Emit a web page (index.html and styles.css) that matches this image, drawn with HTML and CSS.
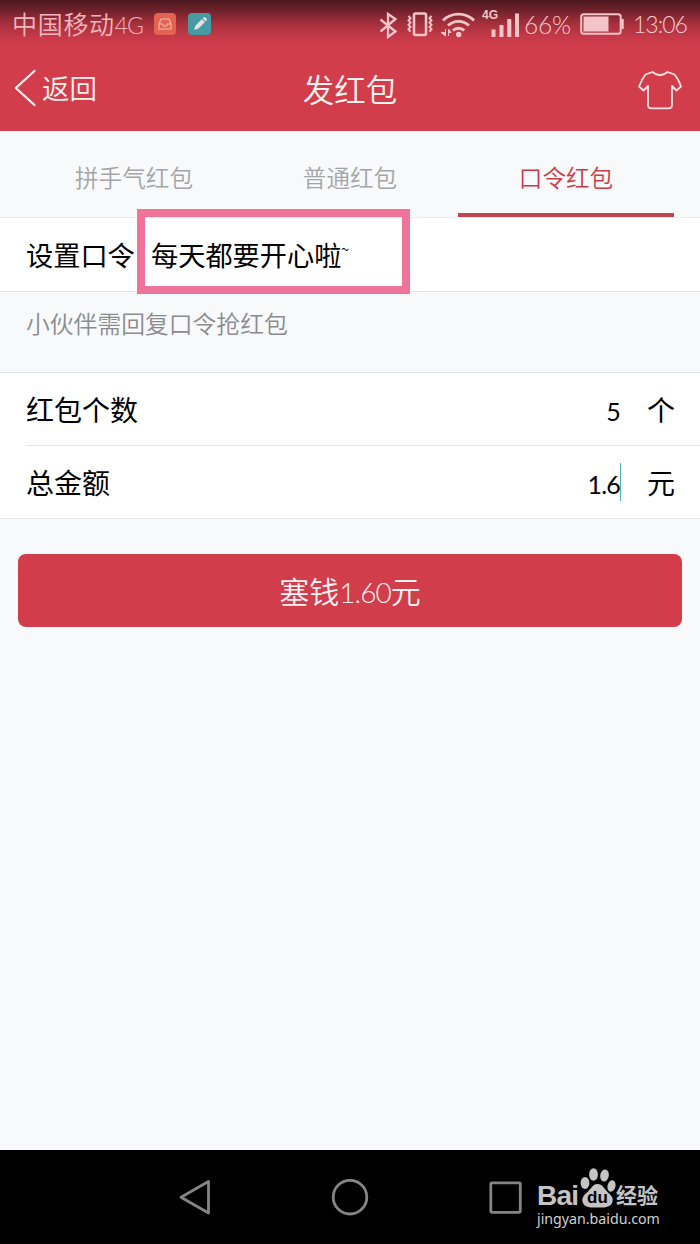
FILE: index.html
```html
<!DOCTYPE html>
<html lang="zh-CN">
<head>
<meta charset="utf-8">
<title>发红包</title>
<link rel="stylesheet" href="styles.css">
</head>
<body>
<div class="screen">
  <div class="top">
    <div class="status">
      <span class="carrier">中国移动<span class="carrier-net">4G</span></span>
      <svg class="app-inbox" width="22" height="22" viewBox="0 0 22 22"><rect width="22" height="22" rx="4" fill="#e2634f"/><path d="M7 6h8l2 5v5H5v-5zM5 11h3.500l1 2h3l1-2H17" fill="none" stroke="#f4b9ae" stroke-width="1.100" stroke-linejoin="round"/></svg>
      <svg class="app-pen" width="23" height="22" viewBox="0 0 23 22"><rect width="23" height="22" rx="4" fill="#469ba3"/><path d="M6 17l1.500-4.500 6.300-6.300 3 3-6.300 6.300zM14.600 5.400l1-1q1-.7 1.900.2l.9.9q.9.900.2 1.900l-1 1z" fill="#eadfe0"/></svg>
      <div class="status-right">
        <svg width="144" height="36" viewBox="376 6 144 36" fill="none" stroke="#f3c5c9">
          <path d="M380.500 19.500l15 12-7.500 5.500V14l7.500 5-15 12.500" stroke-width="2.300"/>
          <rect x="414" y="13.500" width="12" height="21.500" rx="1.500" stroke-width="2.500"/>
          <path d="M408.500 16l2 2.200-2 2.200 2 2.200-2 2.200 2 2.200-2 2.200 2 2.500M431.500 16l-2 2.200 2 2.200-2 2.200 2 2.200-2 2.200 2 2.200-2 2.500" stroke-width="2"/>
          <path d="M443 20.500a22 22 0 0 1 31 0M448 25.600a15 15 0 0 1 21 0M452.800 30.500a8.500 8.500 0 0 1 11.500 0" stroke-width="2.800"/>
          <circle cx="458.700" cy="34.500" r="2.700" fill="#f3c5c9" stroke="none"/>
          <path d="M445.500 29v7l-4.500-3.500h4.500M448.500 36v-7l2.500 3.500h-2.500" fill="#f3c5c9" stroke-width="1"/>
          <path d="M493.500 29.500V37M501.500 25v12M509.300 19v18M517 13.500V37" stroke-width="4"/>
          <text x="482" y="19" class="signal-label">4G</text>
        </svg>
        <span class="percent">66%</span>
        <svg class="battery" width="44" height="24" viewBox="0 0 44 24"><rect x="1.200" y="2.200" width="39.500" height="19.500" rx="2.500" fill="none" stroke="#f3c5c9" stroke-width="2"/><rect x="3.500" y="4.500" width="25" height="15" fill="#f3c5c9"/><path d="M42.500 7v10" stroke="#f3c5c9" stroke-width="2.500"/></svg>
        <span class="clock">13:06</span>
      </div>
    </div>
    <div class="header">
      <div class="back">
        <svg width="24" height="38" viewBox="0 0 24 38"><path d="M20.500 2L1.800 19l18.700 17" fill="none" stroke="#fff0f0" stroke-width="2.300" stroke-linecap="round" stroke-linejoin="round"/></svg>
        <span>返回</span>
      </div>
      <h1 class="title">发红包</h1>
      <svg class="shirt" width="46" height="40" viewBox="0 0 46 40"><path d="M15.500 2L8.500 4.500Q5 9 2 16.500l4.500 4L11 16v19q0 3.300 3.500 3.300h17q3.500 0 3.500-3.300V16l4.500 4.500 4.500-4Q41.500 9 37.500 4.500L30.500 2q-7.500 6.500-15 0z" fill="none" stroke="#ffe3e4" stroke-width="1.800" stroke-linejoin="round"/></svg>
    </div>
  </div>

  <div class="tabs">
    <div class="tab">拼手气红包</div>
    <div class="tab">普通红包</div>
    <div class="tab tab-active">口令红包</div>
  </div>

  <div class="phrase-row">
    <span class="phrase-label">设置口令</span>
    <span class="phrase-value">每天都要开心啦<span class="tilde">~</span></span>
    <span class="highlight"></span>
  </div>

  <div class="hint">小伙伴需回复口令抢红包</div>

  <div class="form">
    <div class="field field-count">
      <span class="label">红包个数</span>
      <span class="amount">5</span>
      <span class="unit">个</span>
    </div>
    <div class="field">
      <span class="label">总金额</span>
      <span class="amount">1.6</span><span class="caret"></span>
      <span class="unit">元</span>
    </div>
  </div>

  <div class="submit">塞钱<span class="submit-sum">1.60</span>元</div>

  <div class="nav">
    <svg class="nav-icons" width="360" height="46" viewBox="170 1174 360 46" fill="none" stroke="#858585" stroke-width="2.800" stroke-linejoin="round">
      <path d="M208.500 1181.500v31.500l-27.500-15.700z"/>
      <circle cx="350" cy="1197.200" r="16.800"/>
      <rect x="490.800" y="1182.800" width="29.500" height="29.500" rx="1"/>
    </svg>
    <div class="watermark">
      <div class="brand">
        <span class="bai">Bai</span>
        <svg class="paw" width="36" height="40" viewBox="0 0 36 40"><g fill="#c4c4c4"><ellipse cx="5" cy="15" rx="4.400" ry="6"/><ellipse cx="13.500" cy="6.500" rx="4.400" ry="6.200"/><ellipse cx="24.500" cy="7.500" rx="4.300" ry="6" transform="rotate(10 24.500 7.500)"/><ellipse cx="31.500" cy="18" rx="4" ry="5.800" transform="rotate(12 31.500 18)"/><path d="M17.500 16c5 0 7 5 10 8s7 6 4.500 11-9 4.500-14.500 4.500S5 40 3 35s1-8 4.500-11 5-8 10-8z"/></g><text x="17.500" y="35" class="du">du</text></svg>
        <span class="jingyan">经验</span>
      </div>
      <div class="site">jingyan.baidu.com</div>
    </div>
  </div>
</div>
</body>
</html>
```

FILE: styles.css
```css
* { box-sizing: border-box; }

body {
  margin: 0;
  font-family: "Noto Sans CJK SC", sans-serif;
  font-weight: 350;
}

.screen {
  width: 700px;
  height: 1244px;
  display: flex;
  flex-direction: column;
  background: #f8f9fb;
  overflow: hidden;
  white-space: nowrap;
}

.top {
  height: 131px;
  flex: none;
  background: linear-gradient(#4b171d 0, #661f28 8px, #a6303d 24px, #c83a49 38px, #d23d4b 50px);
}

.status {
  height: 48px;
  display: flex;
  align-items: center;
  padding-left: 12px;
  color: #f0b5bb;
}

.carrier {
  width: 142px;
  font-size: 25px;
  letter-spacing: 0.7px;
  line-height: 36px;
}

.carrier-net {
  font-family: Lato, sans-serif;
  font-size: 23px;
  letter-spacing: -1.2px;
}

.app-pen { margin-left: 12px; }

.status-right {
  display: flex;
  align-items: center;
  margin-left: auto;
  padding-right: 12px;
  font-family: Lato, sans-serif;
  color: #f6cace;
}

.signal-label {
  font: bold 12px "Liberation Sans", sans-serif;
  fill: #f3c5c9;
  stroke: none;
}

.percent {
  width: 60px;
  padding-left: 4px;
  font-size: 24.500px;
  letter-spacing: -0.2px;
}

.battery { display: block; }

.clock {
  width: 64px;
  padding-left: 9px;
  font-size: 23px;
  letter-spacing: -1px;
}

.header {
  height: 83px;
  display: grid;
  grid-template-columns: 1fr auto 1fr;
  align-items: center;
  padding: 0 17px 0 14px;
  color: #fff2f2;
}

.back {
  display: flex;
  align-items: center;
  gap: 4px;
  font-size: 27.500px;
  line-height: 36px;
  padding-bottom: 3px;
}

.back span { padding-bottom: 2px; }

.title {
  margin: 0;
  font-size: 31.500px;
  font-weight: 350;
  line-height: 40px;
  padding: 0 0 3px 3px;
}

.shirt { justify-self: end; }

.tabs {
  height: 87px;
  flex: none;
  display: grid;
  grid-template-columns: repeat(3, 216px);
  padding: 0 26px;
  border-bottom: 1px solid #ebecee;
}

.tab {
  font-size: 23.600px;
  line-height: 35px;
  padding-top: 29px;
  text-align: center;
  color: #a4a5a7;
}

.tab-active {
  color: #c93c49;
  border-bottom: 4px solid #c34552;
}

.phrase-row {
  position: relative;
  height: 74px;
  flex: none;
  display: flex;
  align-items: center;
  padding: 0 0 2px 26px;
  font-size: 27.200px;
  font-weight: 400;
  color: #000;
  background: #fff;
  border-bottom: 1px solid #e3e4e6;
}

.phrase-label { width: 125px; }

.tilde {
  font-size: 14px;
  line-height: 1;
  vertical-align: 11px;
}

.highlight {
  position: absolute;
  left: 137px;
  top: -9px;
  width: 273px;
  height: 85px;
  border: 8px solid #f07399;
}

.hint {
  height: 80px;
  flex: none;
  padding: 13px 26px 0;
  font-size: 23.800px;
  line-height: 35px;
  color: #8a8b8e;
}

.form {
  height: 147px;
  flex: none;
  background: #fff;
  border-top: 1px solid #e3e4e6;
  border-bottom: 1px solid #e3e4e6;
}

.field {
  height: 72px;
  margin-left: 26px;
  padding-right: 26px;
  display: flex;
  align-items: center;
  font-size: 28px;
  font-weight: 400;
  color: #000;
}

.field-count {
  height: 73px;
  border-bottom: 1px solid #e3e4e6;
}

.amount {
  margin-left: auto;
  padding-top: 4px;
  font-family: Lato, sans-serif;
  font-size: 25px;
  letter-spacing: -0.8px;
}

.field-count .amount { margin-right: 1px; }

.caret {
  width: 1px;
  height: 38px;
  background: #4fb5ad;
}

.unit { margin-left: 26px; margin-right: -1px; }

.submit {
  height: 73px;
  flex: none;
  margin: 35px 18px 0;
  border-radius: 8px;
  background: #d13d4b;
  color: #fff2f2;
  font-size: 30px;
  line-height: 72px;
  text-align: center;
}

.submit-sum {
  font-family: Lato, sans-serif;
  font-size: 28px;
  letter-spacing: -1px;
}

.nav {
  position: relative;
  height: 94px;
  flex: none;
  margin-top: auto;
  padding: 24px 0 0 170px;
  background: #000;
}

.nav-icons { display: block; }

.watermark {
  position: absolute;
  left: 537px;
  top: 18px;
  width: 126px;
  color: #c4c4c4;
}

.brand {
  height: 40px;
  display: flex;
  align-items: flex-end;
}

.bai {
  width: 43px;
  font: bold 28px/25px "Liberation Sans", sans-serif;
  letter-spacing: -0.8px;
}

.du {
  font: bold 17px "Liberation Sans", sans-serif;
  fill: #000;
  text-anchor: middle;
}

.jingyan {
  font-size: 21px;
  font-weight: 700;
  line-height: 27px;
}

.site {
  margin-top: 2px;
  font: 14.200px/18px "Noto Sans", sans-serif;
  color: #d0d0d0;
}
```
